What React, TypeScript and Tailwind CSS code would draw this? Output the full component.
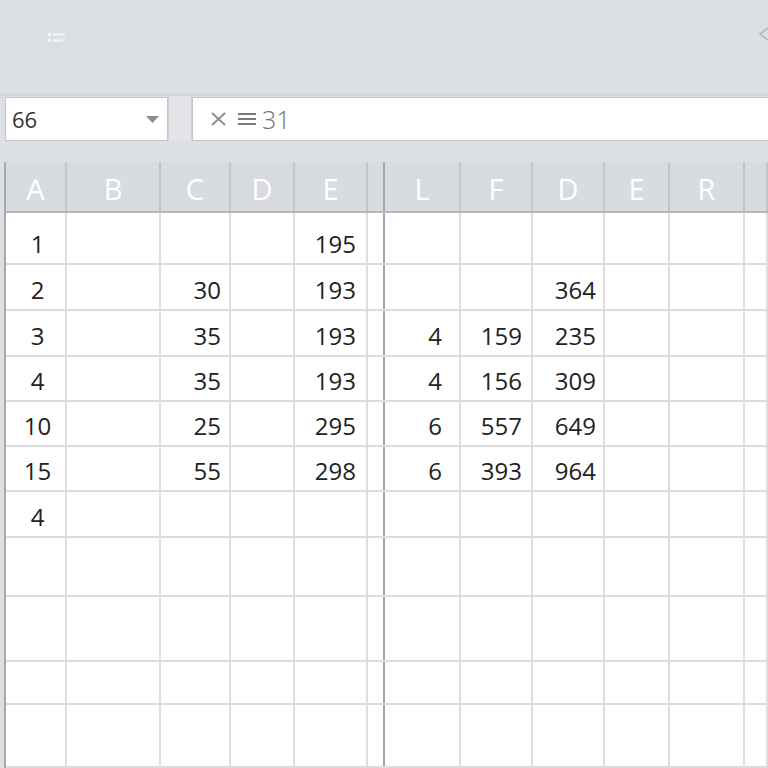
import React from 'react'

const colWidths = [61, 94, 70, 64, 73, 17, 76, 72, 72, 65, 75]
const headers = ['A', 'B', 'C', 'D', 'E', '', 'L', 'F', 'D', 'E', 'R', '']
const rowHeights = [52, 46, 46, 45, 45, 45, 46, 59, 65, 43, 63]

// cell values per row, by column index
const data: Record<number, string>[] = [
  { 0: '1', 4: '195' },
  { 0: '2', 2: '30', 4: '193', 8: '364' },
  { 0: '3', 2: '35', 4: '193', 6: '4', 7: '159', 8: '235' },
  { 0: '4', 2: '35', 4: '193', 6: '4', 7: '156', 8: '309' },
  { 0: '10', 2: '25', 4: '295', 6: '6', 7: '557', 8: '649' },
  { 0: '15', 2: '55', 4: '298', 6: '6', 7: '393', 8: '964' },
  { 0: '4' },
]

const padRight: Record<number, string> = {
  2: 'pr-[8px]',
  4: 'pr-[10px]',
  6: 'pr-[17px]',
  7: 'pr-[9px]',
  8: 'pr-[7px]',
}

const gridCols =
  'grid-cols-[61px_94px_70px_64px_73px_17px_76px_72px_72px_65px_75px_1fr]'

function cellBorder(i: number) {
  if (i === 5) return 'border-r-2 border-r-[#a2a6ab]'
  return 'border-r-2 border-r-[#dedede]'
}

export default function App() {
  return (
    <div className="w-[768px] h-[768px] overflow-hidden bg-[#dcdfe3] flex flex-col font-['Open_Sans',sans-serif]">
      {/* Toolbar */}
      <div className="h-[96px] shrink-0 flex justify-between items-start border-b-[3px] border-[#d2d5d9]">
        <div className="pl-[48px] pt-[33px]">
          <svg width="20" height="10" viewBox="0 0 20 10">
            <rect x="0" y="0" width="3" height="3" fill="#f4f5f7" />
            <rect x="5" y="0.5" width="12" height="2" fill="#f4f5f7" />
            <rect x="0" y="6" width="3" height="3" fill="#f4f5f7" />
            <rect x="5" y="6.5" width="10" height="2" fill="#f4f5f7" />
          </svg>
        </div>
        <div className="pt-[26px]">
          <svg width="12" height="16" viewBox="0 0 12 16">
            <path d="M12 2 L4 8 L12 14" stroke="#b9bcc1" strokeWidth="2" fill="none" />
          </svg>
        </div>
      </div>

      {/* Name box + formula bar */}
      <div className="h-[45px] shrink-0 flex pl-[5px] pt-[1px]">
        <div className="w-[163px] h-[44px] bg-white border border-[#c3c6ca] flex items-center justify-between pl-[6px] pr-[8px]">
          <span className="text-[22px] text-[#333] leading-none">66</span>
          <svg width="13" height="7" viewBox="0 0 13 7">
            <path d="M0 0 H13 L6.5 7 Z" fill="#8c8c8c" />
          </svg>
        </div>
        <div className="w-[24px] h-[44px] bg-[#e2e4e7] border-x border-[#cbced2]" />
        <div className="flex-1 h-[44px] bg-white border-y border-l border-[#c3c6ca] flex items-center pl-[17px] gap-[11px] text-[#707070]">
          <svg width="17" height="16" viewBox="0 0 17 16">
            <path d="M2 2 L15 14 M15 2 L2 14" stroke="#8a8a8a" strokeWidth="1.8" />
          </svg>
          <span className="flex items-center gap-[6px]">
            <svg width="18" height="14" viewBox="0 0 18 14">
              <path d="M0 2 H18 M0 7 H18 M0 12 H18" stroke="#7a7a7a" strokeWidth="1.8" />
            </svg>
            <span className="text-[25px] font-light leading-none">31</span>
          </span>
        </div>
      </div>

      <div className="h-[21px] shrink-0" />

      {/* Sheet */}
      <div className="flex-1 ml-[4px] border-l-2 border-[#a6aaaf] bg-white">
        <div className={`grid ${gridCols} h-[51px] bg-[#d8dbdf] border-b-2 border-[#b5b9bd]`}>
          {headers.map((h, i) => (
            <div
              key={i}
              className={`flex items-end justify-center pb-[8px] text-[29px] leading-none text-white ${
                i === 5 ? 'border-r-2 border-r-[#a4a8ad]' : 'border-r-2 border-r-[#c2c6ca]'
              }`}
            >
              {h}
            </div>
          ))}
        </div>

        {rowHeights.map((rh, r) => (
          <div
            key={r}
            className={`grid ${gridCols} border-b-2 border-[#dcdcdc]`}
            style={{ height: rh }}
          >
            {colWidths.concat([0]).map((_, c) => {
              const v = data[r]?.[c]
              return (
                <div
                  key={c}
                  className={`flex items-end pb-[7px] text-[24px] leading-none text-[#222] ${cellBorder(c)} ${
                    c === 0 ? 'justify-center pl-[4px]' : `justify-end ${padRight[c] ?? ''}`
                  }`}
                >
                  {v}
                </div>
              )
            })}
          </div>
        ))}
      </div>
    </div>
  )
}
